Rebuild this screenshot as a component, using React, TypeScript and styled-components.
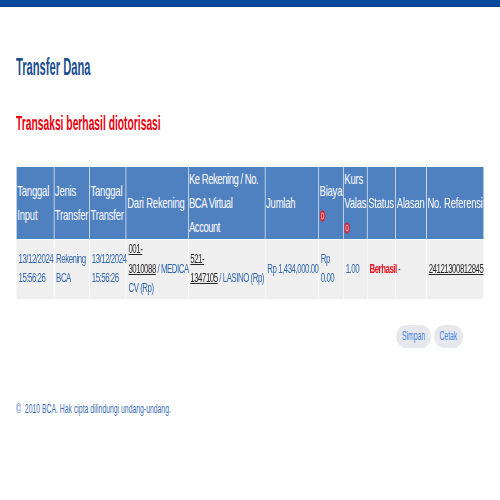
import React from "react";
import styled, { createGlobalStyle } from "styled-components";

const TABLE_SX = 0.63;
const SPACING = 1.6;

const GlobalStyle = createGlobalStyle`
  html, body {
    margin: 0;
    padding: 0;
    background: #ffffff;
    overflow-x: hidden;
  }
  body {
    font-family: "Liberation Sans", Arial, sans-serif;
  }
`;

const Page = styled.div`
  width: 500px;
  min-height: 500px;
  background: #ffffff;
`;

const TopBar = styled.div`
  height: 7px;
  background: #07489c;
  border-bottom: 1px solid #063e86;
  box-sizing: border-box;
`;

const Content = styled.main`
  display: flex;
  flex-direction: column;
  padding: 0 0 0 16px;
`;

const Title = styled.h1`
  margin: 46px 0 0;
  font-size: 24px;
  line-height: 28px;
  font-weight: 700;
  color: #1b4e92;
  white-space: nowrap;
  transform: scaleX(0.466);
  transform-origin: left top;
`;

const Notice = styled.h2`
  margin: 30px 0 0;
  font-size: 21px;
  line-height: 24px;
  font-weight: 700;
  color: #e8000e;
  white-space: nowrap;
  transform: scaleX(0.49);
  transform-origin: left top;
`;

const TableFrame = styled.div`
  margin-top: 31px;
  transform: scaleX(${TABLE_SX});
  transform-origin: left top;
`;

const Table = styled.table<{ $width: number }>`
  width: ${(p) => p.$width}px;
  table-layout: fixed;
  border-collapse: separate;
  border-spacing: ${SPACING}px 1px;
  background: #ffffff;
`;

const Col = styled.col<{ $w: number }>`
  width: ${(p) => p.$w}px;
`;

const HeadRow = styled.tr`
  height: 72px;
`;

const Th = styled.th<{ $tight?: boolean }>`
  background: #4f80bf;
  color: #ffffff;
  font-weight: 400;
  font-size: 15px;
  line-height: 24px;
  letter-spacing: ${(p) => (p.$tight ? "-0.7px" : "-0.3px")};
  text-align: left;
  vertical-align: middle;
  padding: 0 0 0 1px;
  white-space: ${(p) => (p.$tight ? "nowrap" : "normal")};
  overflow: visible;
`;

const Td = styled.td<{ $nowrap?: boolean }>`
  background: #efefef;
  color: #3066ae;
  font-size: 12.5px;
  line-height: 19.5px;
  letter-spacing: -0.75px;
  text-align: left;
  vertical-align: middle;
  padding: 0 0 0 3px;
  white-space: ${(p) => (p.$nowrap ? "nowrap" : "normal")};
`;

const AccountLink = styled.a`
  color: #2a2a2a;
  text-decoration: underline;
`;

const StatusText = styled.span`
  color: #e8101c;
  font-weight: 700;
`;

const Actions = styled.div`
  display: flex;
  justify-content: flex-end;
  gap: 5px;
  margin: 25px 37px 0 0;
  transform: scaleX(0.57);
  transform-origin: right top;
`;

const Button = styled.button`
  height: 23px;
  padding: 0 10px;
  border: none;
  border-radius: 18px / 11px;
  background: #e7e7ee;
  color: #3f84dc;
  font-family: "Liberation Sans", Arial, sans-serif;
  font-size: 12px;
  line-height: 23px;
  cursor: pointer;
`;

const Footer = styled.footer`
  margin-top: 54px;
  font-size: 12px;
  line-height: 14px;
  color: #3a6db4;
  white-space: nowrap;
  transform: scaleX(0.57);
  transform-origin: left top;
`;

const InfoIcon = () => (
  <svg width="9" height="12" viewBox="0 0 9 12" style={{ verticalAlign: "middle" }}>
    <ellipse cx="4.5" cy="6" rx="4.5" ry="5.6" fill="#d8232f" />
    <ellipse cx="4.5" cy="6" rx="2" ry="3" fill="none" stroke="#f3b7bb" strokeWidth="1.2" />
  </svg>
);

const measured = [37.6, 35.7, 36.7, 61.6, 76.7, 53.3, 25, 24, 28.7, 30.7, 57.3];
const colWidths = measured.map((m) => m / TABLE_SX - SPACING);
const tableWidth =
  colWidths.reduce((a, b) => a + b, 0) + SPACING * (colWidths.length + 1);

export default function App() {
  return (
    <Page>
      <GlobalStyle />
      <TopBar />
      <Content>
        <Title>Transfer Dana</Title>
        <Notice>Transaksi berhasil diotorisasi</Notice>
        <TableFrame>
          <Table $width={tableWidth}>
            <colgroup>
              {colWidths.map((w, i) => (
                <Col key={i} $w={w} />
              ))}
            </colgroup>
            <thead>
              <HeadRow>
                <Th>Tanggal Input</Th>
                <Th>Jenis Transfer</Th>
                <Th>Tanggal Transfer</Th>
                <Th>Dari Rekening</Th>
                <Th $tight>
                  Ke Rekening / No.
                  <br />
                  BCA Virtual
                  <br />
                  Account
                </Th>
                <Th>Jumlah</Th>
                <Th>
                  Biaya
                  <br />
                  <InfoIcon />
                </Th>
                <Th>
                  Kurs Valas
                  <br />
                  <InfoIcon />
                </Th>
                <Th>Status</Th>
                <Th>Alasan</Th>
                <Th>No. Referensi</Th>
              </HeadRow>
            </thead>
            <tbody>
              <tr>
                <Td>
                  13/12/2024
                  <br />
                  15:56:26
                </Td>
                <Td>
                  Rekening
                  <br />
                  BCA
                </Td>
                <Td>
                  13/12/2024
                  <br />
                  15:56:26
                </Td>
                <Td $nowrap>
                  <AccountLink href="#">
                    001-
                    <br />
                    3010088
                  </AccountLink>{" "}
                  / MEDICA
                  <br />
                  CV (Rp)
                </Td>
                <Td $nowrap>
                  <AccountLink href="#">
                    521-
                    <br />
                    1347105
                  </AccountLink>{" "}
                  / LASINO (Rp)
                </Td>
                <Td $nowrap>Rp 1,434,000.00</Td>
                <Td>
                  Rp
                  <br />
                  0.00
                </Td>
                <Td>1.00</Td>
                <Td>
                  <StatusText>Berhasil</StatusText>
                </Td>
                <Td>-</Td>
                <Td $nowrap>
                  <AccountLink href="#">24121300812845</AccountLink>
                </Td>
              </tr>
            </tbody>
          </Table>
        </TableFrame>
        <Actions>
          <Button type="button">Simpan</Button>
          <Button type="button">Cetak</Button>
        </Actions>
        <Footer>©&nbsp; 2010 BCA. Hak cipta dilindungi undang-undang.</Footer>
      </Content>
    </Page>
  );
}
